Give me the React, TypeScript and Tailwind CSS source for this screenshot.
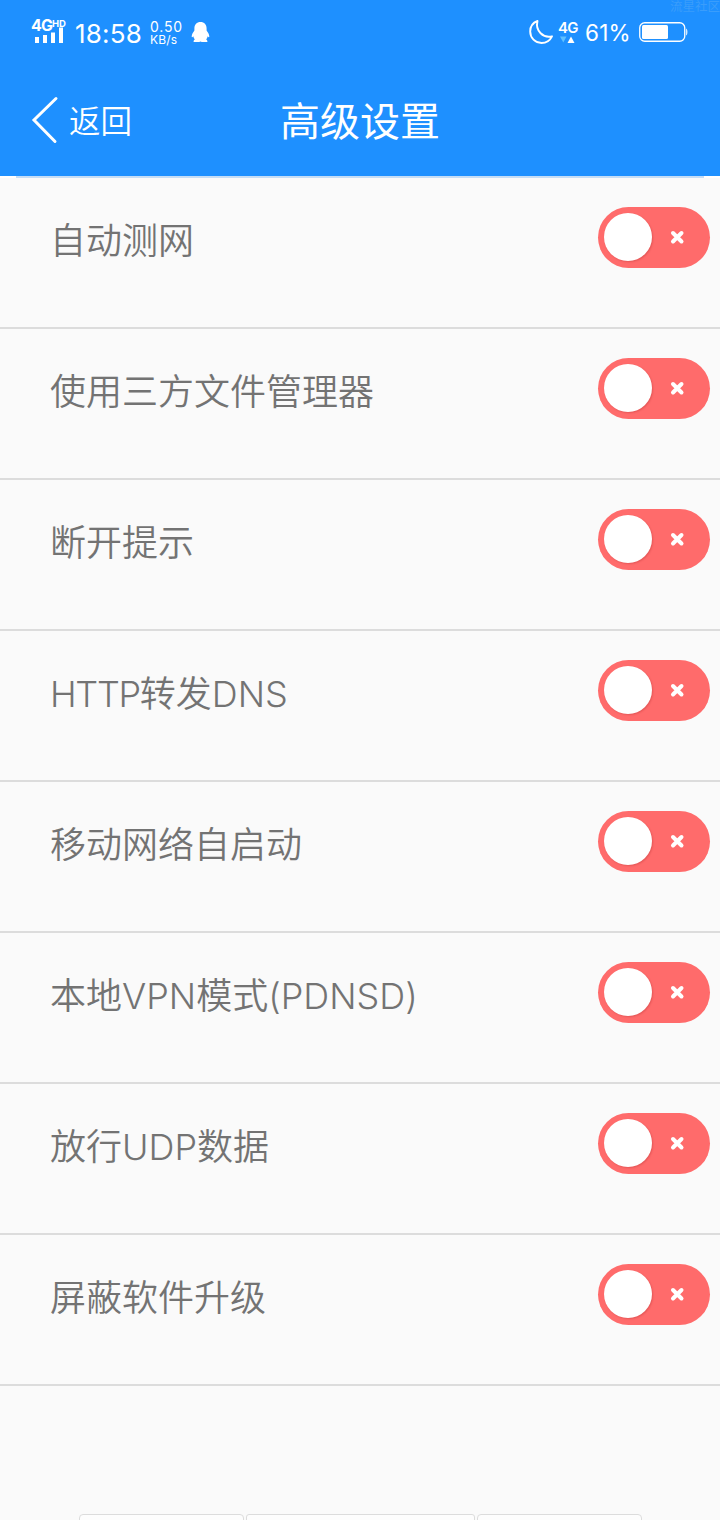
const SETTINGS = [
  { key: "autoTest", label: "自动测网" },
  { key: "fileManager", label: "使用三方文件管理器" },
  { key: "disconnectHint", label: "断开提示" },
  { key: "httpDns", prefix: "HTTP", label: "转发DNS" },
  { key: "autoStart", label: "移动网络自启动" },
  { key: "localVpn", label: "本地VPN模式(PDNSD)" },
  { key: "allowUdp", label: "放行UDP数据" },
  { key: "blockUpdate", label: "屏蔽软件升级" },
];

function SignalIcon() {
  return (
    <div className="relative h-[26px] w-[36px]">
      <span className="absolute top-0 left-[-1px] text-[16px] leading-[15px] font-bold tracking-[-0.8px]">4G</span>
      <span className="absolute top-[1px] left-[20px] text-[9.5px] leading-[9px] font-bold">HD</span>
      <svg className="absolute top-0 left-0" width="36" height="26" fill="currentColor">
        <rect x="3" y="19" width="4" height="6" />
        <rect x="11" y="17" width="4" height="8" />
        <rect x="19" y="14.500" width="4" height="10.500" />
        <rect x="27" y="9.500" width="4" height="15.500" />
      </svg>
    </div>
  );
}

function StatusBar() {
  return (
    <div className="flex h-[64px] justify-between pt-[18px] pr-[32px] pl-[32px]">
      <div className="flex">
        <SignalIcon />
        <span className="ml-[7px] w-[70px] text-[26px] leading-[32px] tracking-[0.2px]">18:58</span>
        <div className="ml-[4px] w-[38px] text-[14px] leading-[13px]">
          <div className="pt-[2px] pl-[1px] tracking-[0.8px]">0.50</div>
          <div className="pl-[1px] text-[12px] tracking-[0.2px]">KB/s</div>
        </div>
        <svg className="mt-[3px] ml-[4px]" width="19" height="23" viewBox="0 0 19 23" fill="currentColor">
          <path d="M9.500 1C5.800 1 3.400 3.600 3.400 7.400v2.200C2 11.400.900 13.400.700 15.200c-.1 1.200.5 1.300 1.600.1.200 1.300.8 2.400 1.600 3.300-.9.400-1.300 1-1.300 2.400h5.600l1.300-.5 1.300.5h5.600c0-1.400-.4-2-1.300-2.400.8-.9 1.400-2 1.600-3.300 1.100 1.200 1.700 1.100 1.600-.1-.2-1.800-1.300-3.800-2.700-5.600V7.400C15.600 3.600 13.200 1 9.500 1z" />
        </svg>
      </div>

      <div className="flex">
        <svg className="mt-[1px]" width="25" height="26" viewBox="0 0 25 26" fill="none" stroke="currentColor" strokeWidth="1.900" strokeLinejoin="round">
          <path d="M8.500 2C4 3.700 1.200 7.500 1.200 12.500c0 6.500 5 11.500 11.300 11.500 4.700 0 8.500-2.600 10.500-6.700C14.500 19.500 6 12 8.500 2z" />
        </svg>
        <div className="relative ml-[4px] h-[26px] w-[22px]">
          <span className="absolute top-[2px] left-0 text-[15px] leading-[15px] font-semibold tracking-[-0.8px]">4G</span>
          <svg className="absolute top-[18px] left-[2px]" width="18" height="8">
            <path d="M0 .5h6.500L3.300 6.500z" fill="#5fc0ff" />
            <path d="M7.500 7h7L11 .5z" fill="currentColor" />
          </svg>
        </div>
        <span className="ml-[5px] w-[50px] text-[22.500px] leading-[30px] tracking-[0.2px]">61%</span>
        <svg className="mt-[4px] ml-[4px]" width="49" height="20" fill="none">
          <rect x="0.750" y="0.750" width="45" height="18.500" rx="5" stroke="currentColor" strokeWidth="1.300" />
          <rect x="3" y="3" width="26" height="14" rx="1.500" fill="currentColor" />
          <path d="M47.200 6.500c1.600.8 1.600 6.200 0 7z" fill="currentColor" />
        </svg>
      </div>
    </div>
  );
}

function NavBar() {
  return (
    <div className="grid h-[112px] grid-cols-3 items-center">
      <button className="flex items-center pl-[31px]">
        <svg width="28" height="48" fill="none" stroke="currentColor" strokeWidth="3" strokeLinecap="round">
          <path d="M25 2.500L3 24L24 45.500" />
        </svg>
        <span className="mt-[4px] ml-[10px] text-[31.500px] leading-[48px] font-[350]">返回</span>
      </button>
      <h1 className="mt-[4px] text-center text-[40px] leading-[56px]">高级设置</h1>
    </div>
  );
}

function Toggle() {
  return (
    <button className="flex h-[61px] w-[112px] items-center rounded-full bg-[#ff6b6b] pb-[1px] pl-[6px]">
      <span className="size-[48px] rounded-full bg-white shadow-[1px_1px_2px_rgba(120,0,0,0.2)]" />
      <svg className="ml-[17px]" width="16" height="16" stroke="#fff" strokeWidth="4" strokeLinecap="round">
        <path d="M4 4l8.500 8.500M12.500 4L4 12.500" />
      </svg>
    </button>
  );
}

export default function App() {
  return (
    <div className="flex h-[1520px] w-[720px] flex-col overflow-hidden bg-[#fafafa] font-[Inter,'Noto_Sans_CJK_SC',sans-serif]">
      <header className="relative h-[176px] shrink-0 bg-[#1e90ff] text-white">
        <span className="absolute top-0 right-0 text-[12.500px] leading-[14px] whitespace-nowrap text-[#3a9dfb]">流星社区</span>
        <StatusBar />
        <NavBar />
      </header>
      <div className="h-[2px] shrink-0 bg-white px-[16px]">
        <div className="h-full bg-[#c5ddf6]" />
      </div>

      <ul>
        {SETTINGS.map((item) => (
          <li
            key={item.key}
            className="flex h-[151px] items-start justify-between border-b-2 border-[#dcdcdc] pt-[29px] pr-[10px] pl-[50px]"
          >
            <span className="mt-[8px] text-[36px] leading-[52px] font-[350] text-[#737373]">
              {item.prefix && <span className="tracking-[-1.300px]">{item.prefix}</span>}
              {item.label}
            </span>
            <Toggle />
          </li>
        ))}
      </ul>

      <div className="mt-auto flex h-[6px] justify-center gap-[2px] overflow-hidden">
        <div className="h-[20px] w-[165px] rounded-[4px] border border-[#dcdcdc] bg-[#fdfdfd]" />
        <div className="h-[20px] w-[229px] rounded-[3px] border border-[#dcdcdc] bg-[#fdfdfd]" />
        <div className="h-[20px] w-[165px] rounded-[4px] border border-[#dcdcdc] bg-[#fdfdfd]" />
      </div>
    </div>
  );
}
